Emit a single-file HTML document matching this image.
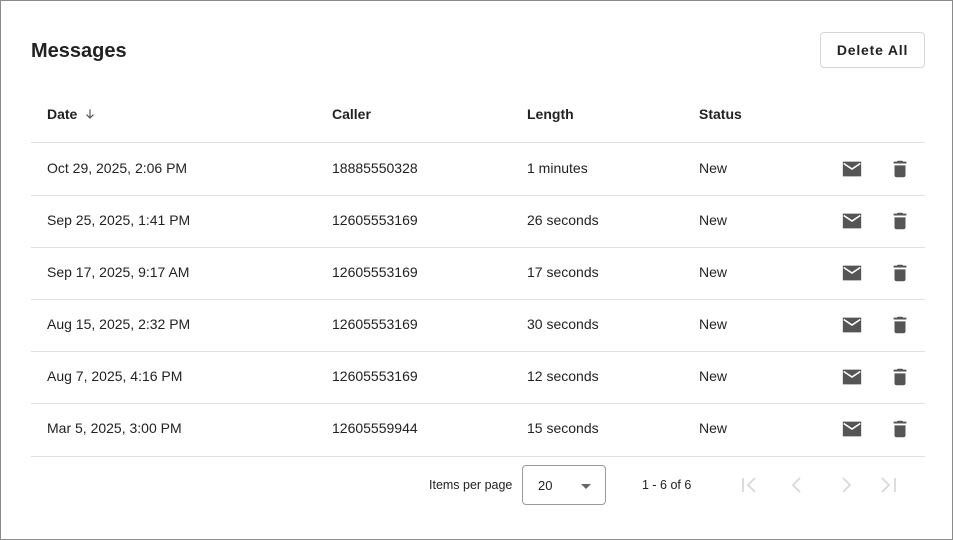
<!DOCTYPE html>
<html><head><style>
*{box-sizing:border-box;margin:0;padding:0}
body{width:953px;height:540px;font-family:"Liberation Sans",Arial,sans-serif;color:#222;background:#fff;position:relative;overflow:hidden}
.frame{position:absolute;left:0;top:0;width:953px;height:540px;border:1px solid #8a8a8a}
.title{position:absolute;left:31px;top:40px;font-size:20px;font-weight:bold;color:#222}
.btn{position:absolute;left:820px;top:32px;width:105px;height:36px;border:1px solid #d6d6d6;border-radius:4px;font-size:14px;font-weight:bold;letter-spacing:.8px;text-align:center;line-height:34px;color:#222}
.hdr,.row{position:absolute;left:31px;width:894px;font-size:14px}
.hdr{top:96px;height:47px;font-weight:bold;color:#222;border-bottom:1px solid #e0e0e0}
.row{height:52px;border-bottom:1px solid #e0e0e0}
.c{position:absolute;top:0;line-height:inherit}
.hdr .c{line-height:36px}
.row .c{line-height:48px}
.c1{left:16px}.c2{left:301px}.c3{left:496px}.c4{left:668px}
.ic{position:absolute;top:14px}
.foot{position:absolute;top:456px;left:0;width:953px;font-size:12.5px;color:#222}
</style></head><body>
<div class="frame"></div>
<div class="title">Messages</div>
<div class="btn">Delete All</div>
<div class="hdr"><span class="c c1">Date <svg width="14" height="14" viewBox="0 0 24 24" style="vertical-align:-2px;margin-left:2px"><path d="M12 4v15M6 13l6 6 6-6" stroke="#555" stroke-width="2" fill="none"/></svg></span><span class="c c2">Caller</span><span class="c c3">Length</span><span class="c c4">Status</span></div>

<div class="row" style="top:144px"><span class="c c1">Oct 29, 2025, 2:06 PM</span><span class="c c2">18885550328</span><span class="c c3">1 minutes</span><span class="c c4">New</span>
<svg class="ic" style="left:810px" width="22" height="22" viewBox="0 0 24 24"><path d="M2 4h20v16H2z" fill="#555"/><path d="M3 6l9 6 9-6" stroke="#fff" stroke-width="1.8" fill="none"/></svg>
<svg class="ic" style="left:858px" width="22" height="22" viewBox="0 0 24 24"><path d="M6 19c0 1.1.9 2 2 2h8c1.1 0 2-.9 2-2V8H6v11zM19 4h-3.5l-1-1h-5l-1 1H5v2h14V4z" fill="#555"/></svg></div>
<div class="row" style="top:196px"><span class="c c1">Sep 25, 2025, 1:41 PM</span><span class="c c2">12605553169</span><span class="c c3">26 seconds</span><span class="c c4">New</span>
<svg class="ic" style="left:810px" width="22" height="22" viewBox="0 0 24 24"><path d="M2 4h20v16H2z" fill="#555"/><path d="M3 6l9 6 9-6" stroke="#fff" stroke-width="1.8" fill="none"/></svg>
<svg class="ic" style="left:858px" width="22" height="22" viewBox="0 0 24 24"><path d="M6 19c0 1.1.9 2 2 2h8c1.1 0 2-.9 2-2V8H6v11zM19 4h-3.5l-1-1h-5l-1 1H5v2h14V4z" fill="#555"/></svg></div>
<div class="row" style="top:248px"><span class="c c1">Sep 17, 2025, 9:17 AM</span><span class="c c2">12605553169</span><span class="c c3">17 seconds</span><span class="c c4">New</span>
<svg class="ic" style="left:810px" width="22" height="22" viewBox="0 0 24 24"><path d="M2 4h20v16H2z" fill="#555"/><path d="M3 6l9 6 9-6" stroke="#fff" stroke-width="1.8" fill="none"/></svg>
<svg class="ic" style="left:858px" width="22" height="22" viewBox="0 0 24 24"><path d="M6 19c0 1.1.9 2 2 2h8c1.1 0 2-.9 2-2V8H6v11zM19 4h-3.5l-1-1h-5l-1 1H5v2h14V4z" fill="#555"/></svg></div>
<div class="row" style="top:300px"><span class="c c1">Aug 15, 2025, 2:32 PM</span><span class="c c2">12605553169</span><span class="c c3">30 seconds</span><span class="c c4">New</span>
<svg class="ic" style="left:810px" width="22" height="22" viewBox="0 0 24 24"><path d="M2 4h20v16H2z" fill="#555"/><path d="M3 6l9 6 9-6" stroke="#fff" stroke-width="1.8" fill="none"/></svg>
<svg class="ic" style="left:858px" width="22" height="22" viewBox="0 0 24 24"><path d="M6 19c0 1.1.9 2 2 2h8c1.1 0 2-.9 2-2V8H6v11zM19 4h-3.5l-1-1h-5l-1 1H5v2h14V4z" fill="#555"/></svg></div>
<div class="row" style="top:352px"><span class="c c1">Aug 7, 2025, 4:16 PM</span><span class="c c2">12605553169</span><span class="c c3">12 seconds</span><span class="c c4">New</span>
<svg class="ic" style="left:810px" width="22" height="22" viewBox="0 0 24 24"><path d="M2 4h20v16H2z" fill="#555"/><path d="M3 6l9 6 9-6" stroke="#fff" stroke-width="1.8" fill="none"/></svg>
<svg class="ic" style="left:858px" width="22" height="22" viewBox="0 0 24 24"><path d="M6 19c0 1.1.9 2 2 2h8c1.1 0 2-.9 2-2V8H6v11zM19 4h-3.5l-1-1h-5l-1 1H5v2h14V4z" fill="#555"/></svg></div>
<div class="row" style="top:404px;height:53px"><span class="c c1">Mar 5, 2025, 3:00 PM</span><span class="c c2">12605559944</span><span class="c c3">15 seconds</span><span class="c c4">New</span>
<svg class="ic" style="left:810px" width="22" height="22" viewBox="0 0 24 24"><path d="M2 4h20v16H2z" fill="#555"/><path d="M3 6l9 6 9-6" stroke="#fff" stroke-width="1.8" fill="none"/></svg>
<svg class="ic" style="left:858px" width="22" height="22" viewBox="0 0 24 24"><path d="M6 19c0 1.1.9 2 2 2h8c1.1 0 2-.9 2-2V8H6v11zM19 4h-3.5l-1-1h-5l-1 1H5v2h14V4z" fill="#555"/></svg></div>

<div class="foot">
<span style="position:absolute;left:429px;top:22px">Items per page</span>
<div style="position:absolute;left:522px;top:9px;width:84px;height:40px;border:1px solid #9a9a9a;border-radius:4px"><span style="position:absolute;left:15px;top:12px;font-size:13px">20</span><svg style="position:absolute;left:57px;top:16px" width="12" height="8" viewBox="0 0 12 8"><path d="M1 2h10L6 7z" fill="#666"/></svg></div>
<span style="position:absolute;left:642px;top:22px">1 - 6 of 6</span>
<svg style="position:absolute;left:738px;top:17px" width="160" height="24" viewBox="0 0 160 24" fill="none" stroke="#d8d8d8" stroke-width="1.8"><path d="M5 5v14M17 5l-7 7 7 7"/><path d="M62 5l-7 7 7 7"/><path d="M105 5l7 7-7 7"/><path d="M148 5l7 7-7 7M161 5v14" transform="translate(-4 0)"/></svg>
</div>
</body></html>
